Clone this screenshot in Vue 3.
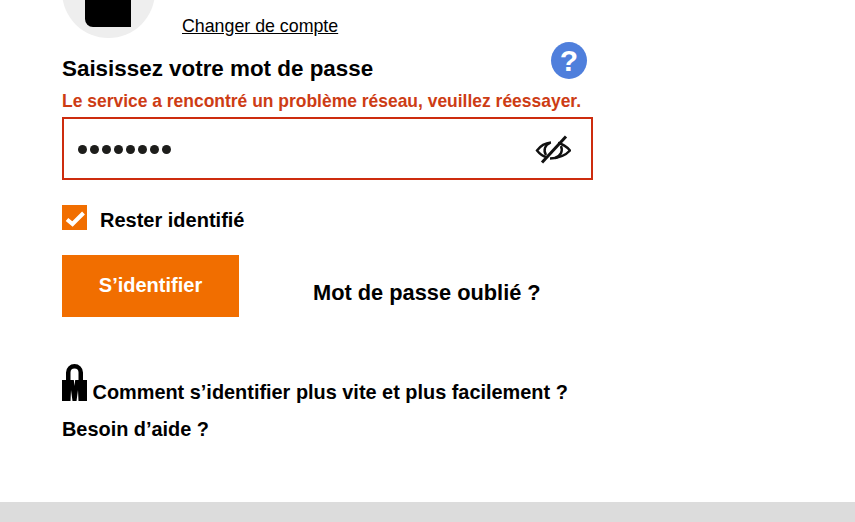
<template>
  <div class="page">
    <main class="content">
      <div class="account">
        <div class="avatar"><div class="avatar-mark"></div></div>
        <a class="switch" href="#">Changer de compte</a>
      </div>

      <div class="title-row">
        <h1>Saisissez votre mot de passe</h1>
        <button class="help" type="button">?</button>
      </div>
      <p class="error">Le service a rencontré un problème réseau, veuillez réessayer.</p>

      <div class="field">
        <span class="dots">
          <i v-for="n in 8" :key="n"></i>
        </span>
        <svg class="eye" width="36" height="30" viewBox="0 0 36 30" fill="none">
          <g stroke="#111" stroke-width="2.400">
            <path d="M16 8.500C11 9 6 11 2 16.500 4 19 7 22 11 23" />
            <path d="M23 9C28 10 32 13 35 16.500 31 21 26 24 15 24.500" />
            <path d="M11 21C8 16 10 11 15 9" />
            <path d="M26 12C28 17 26 22 20 24" />
          </g>
          <path d="M7 28.500L31 2.500" stroke="#111" stroke-width="3" />
        </svg>
      </div>

      <label class="remember">
        <span class="check">
          <svg width="25" height="25" viewBox="0 0 25 25" fill="none">
            <path d="M5 14.500L10.500 19 21.500 8" stroke="#fff" stroke-width="4" />
          </svg>
        </span>
        <span class="remember-label">Rester identifié</span>
      </label>

      <div class="actions">
        <button class="submit" type="button">S’identifier</button>
        <a class="forgot" href="#">Mot de passe oublié ?</a>
      </div>

      <div class="links">
        <a class="mobile-link" href="#">
          <svg width="25" height="37" viewBox="0 0 25 37" fill="#000">
            <path d="M4 17V8.500a8.500 8.500 0 0 1 17 0V17h-4.500V8.500a4 4 0 0 0-8 0V17z" />
            <path d="M0 16h25v21H0zM11.800 16l.7 6 .7-6zM8.500 37h2L9 26zM14.500 37h2L16 26z" fill-rule="evenodd" />
          </svg>
          Comment s’identifier plus vite et plus facilement ?
        </a>
        <a class="help-link" href="#">Besoin d’aide ?</a>
      </div>
    </main>
    <footer class="footer"></footer>
  </div>
</template>

<script setup>
</script>

<style>
html,
body {
  margin: 0;
  background: #fff;
  overflow: hidden;
}
</style>

<style scoped>
.page {
  height: 522px;
  display: flex;
  flex-direction: column;
  overflow: hidden;
  font-family: 'Liberation Sans', Arial, sans-serif;
  color: #000;
}
.content {
  flex: 1;
  width: 531px;
  margin-left: 62px;
}
a {
  color: #000;
  text-decoration: none;
}

.account {
  display: flex;
  align-items: flex-end;
  gap: 27px;
  margin-top: -55px;
  height: 93px;
}
.avatar {
  width: 93px;
  height: 93px;
  border-radius: 50%;
  background: #eee;
  display: flex;
  align-items: flex-end;
  justify-content: center;
  padding-bottom: 11px;
  box-sizing: border-box;
  flex-shrink: 0;
}
.avatar-mark {
  width: 46px;
  height: 60px;
  margin-right: 1px;
  background: #000;
  border-radius: 0 0 0 8px;
}
.switch {
  font-size: 17.800px;
  line-height: 20px;
  text-decoration: underline;
  margin-bottom: 2px;
}

.title-row {
  display: flex;
  justify-content: space-between;
  align-items: flex-start;
  height: 41px;
  margin-top: 4px;
}
h1 {
  margin: 14px 0 0;
  font-size: 22.400px;
  line-height: 26px;
  font-weight: 700;
}
.help {
  width: 36px;
  height: 37px;
  margin-right: 6px;
  padding: 0;
  border: none;
  border-radius: 50%;
  background: #4f7fdc;
  color: #fff;
  font: 700 30px/37px 'Liberation Sans', Arial, sans-serif;
}
.error {
  margin: 8px 0 0;
  font-size: 17.470px;
  line-height: 20px;
  font-weight: 700;
  color: #cd3c14;
}

.field {
  box-sizing: border-box;
  height: 63px;
  margin-top: 6px;
  border: 2px solid #cd2c0e;
  display: flex;
  align-items: center;
  justify-content: space-between;
  padding: 0 20px 0 14px;
}
.dots {
  display: flex;
  gap: 3px;
  margin-top: 1px;
}
.dots i {
  width: 9px;
  height: 9px;
  border-radius: 50%;
  background: #1d1d1b;
}

.remember {
  display: flex;
  align-items: flex-start;
  gap: 13px;
  margin-top: 25px;
  font-size: 20px;
  font-weight: 700;
  line-height: 25px;
}
.remember-label {
  margin-top: 3px;
}
.check {
  width: 25px;
  height: 25px;
  background: #f16e00;
  display: block;
}
.check svg {
  display: block;
}

.actions {
  display: flex;
  align-items: center;
  gap: 74px;
  margin-top: 22px;
}
.submit {
  width: 177px;
  height: 62px;
  border: none;
  padding: 0 0 2px;
  background: #f16e00;
  color: #fff;
  font: 700 20px/22px 'Liberation Sans', Arial, sans-serif;
}
.forgot {
  font-size: 21.800px;
  font-weight: 700;
  line-height: 26px;
  margin-top: 13px;
}

.links {
  margin-top: 47px;
  font-size: 19.900px;
  font-weight: 700;
  line-height: 22px;
}
.mobile-link {
  display: block;
}
.mobile-link svg {
  vertical-align: -2px;
}
.help-link {
  display: block;
  margin-top: 15px;
}

.footer {
  height: 20px;
  background: #dcdcdc;
}
</style>
